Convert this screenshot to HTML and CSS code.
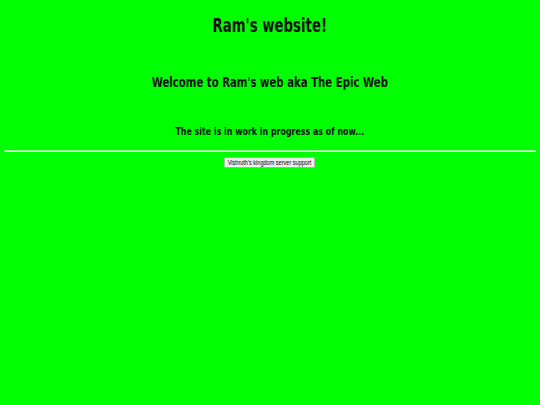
FILE: index.html
```html
<!DOCTYPE html>
<html>
<head>
<meta charset="utf-8">
<title>Ram's website!</title>
<link rel="stylesheet" href="styles.css">
</head>
<body>
<h1 class="title"><span class="squeeze">Ram's website!</span></h1>
<h2 class="welcome"><span class="squeeze">Welcome to Ram's web aka The Epic Web</span></h2>
<h3 class="status"><span class="squeeze">The site is in work in progress as of now...</span></h3>
<hr class="rule">
<div class="actions"><button class="btn">Vishruth's kingdom server support</button></div>
</body>
</html>
```
FILE: styles.css
```css
html, body { margin: 0; padding: 0; }
body {
  background: #00ff00;
  color: #000;
  font-family: "DejaVu Sans", sans-serif;
  padding: 0 4px;
  text-align: center;
}
.squeeze {
  display: inline-block;
  vertical-align: top;
  transform: scaleX(0.7);
  transform-origin: 50% 50%;
  white-space: nowrap;
}
.title { font-size: 19px; font-weight: bold; margin: 13px 0 0; line-height: 24px; color: #111; }
.welcome { font-size: 14.5px; font-weight: bold; margin: 36px 0 0; line-height: 18px; color: #111; }
.status { font-size: 11.3px; font-weight: bold; margin: 33px 0 0; line-height: 16px; color: #111; }
.rule { margin: 10px 0 0; border: 0; border-top: 1px solid #a8eca8; border-bottom: 1px solid #c8f0c8; height: 0; }
.actions { margin-top: 5px; line-height: 0; }
.btn {
  font-family: "Liberation Sans", Arial, sans-serif;
  font-size: 7.5px;
  line-height: 9px;
  padding: 0 4px;
  background: #efefef;
  border: 1px solid #aaa;
  border-radius: 1px;
  color: #000;
  transform: scaleX(0.74);
}
```
